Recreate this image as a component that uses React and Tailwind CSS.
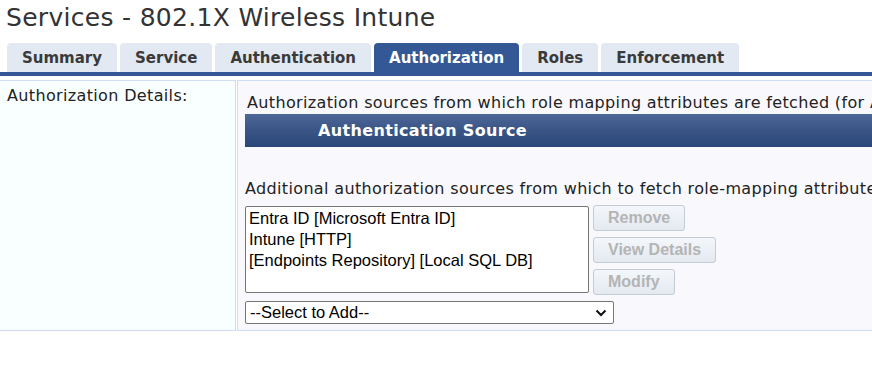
import React from "react";

const tabs = ["Summary", "Service", "Authentication", "Authorization", "Roles", "Enforcement"];

const sources = [
    "Entra ID [Microsoft Entra ID]",
    "Intune [HTTP]",
    "[Endpoints Repository] [Local SQL DB]",
];

function DisabledButton({ label }) {
    return (
        <button
            disabled
            className="h-[26px] px-[14px] rounded-[3px] border border-[#c3cbd6] bg-gradient-to-b from-[#f4f7fb] to-[#e4e9f1] text-[#b4b4b4] font-bold text-[16px] font-['Liberation_Sans',Arial,sans-serif] leading-none self-start"
        >
            {label}
        </button>
    );
}

export default function App() {
    return (
        <div className="w-[872px] h-[380px] overflow-hidden bg-white text-[#222] font-['DejaVu_Sans',Verdana,sans-serif]">
            {/* Page title */}
            <h1 className="pl-[6px] pt-[3px] h-[43px] text-[25px] tracking-[0.3px] leading-[30px] text-[#333]">
                Services - 802.1X Wireless Intune
            </h1>

            {/* Tabs */}
            <div className="flex gap-[3px] pl-[7px] h-[29px]">
                {tabs.map((t) => (
                    <div
                        key={t}
                        className={
                            t === "Authorization"
                                ? "px-[15px] pt-[1px] rounded-t-[4px] bg-[#335895] text-white font-bold text-[15px] flex items-center"
                                : "px-[15px] pt-[1px] rounded-t-[4px] bg-[#e2e9f3] text-[#3a3a3a] font-bold text-[15px] flex items-center"
                        }
                    >
                        {t}
                    </div>
                ))}
            </div>
            <div className="h-[4px] bg-[#335895]" />

            {/* Details table */}
            <div className="mt-[4px] flex text-[16px] tracking-[0.35px]">
                <div className="w-[236px] h-[251px] border-t border-b border-r border-[#cfdcf6] bg-[#f9fffe] pl-[7px] pt-[5px] leading-[19px]">
                    Authorization Details:
                </div>
                <div className="flex-1 ml-[1px] h-[251px] border-t border-b border-l border-[#cfdcf6] bg-[#f9f9fd] pl-[7px] pt-[12px] whitespace-nowrap overflow-hidden">
                    <div className="pl-[2px] leading-[19px]">
                        Authorization sources from which role mapping attributes are fetched (for Authentication Sources listed below)
                    </div>
                    <div className="mt-[2px] h-[33px] bg-gradient-to-b from-[#4d6898] via-[#3a5585] to-[#29467a] text-white font-bold pl-[73px] flex items-center">
                        Authentication Source
                    </div>
                    <div className="mt-[32px] leading-[19px]">
                        Additional authorization sources from which to fetch role-mapping attributes
                    </div>
                    <div className="mt-[8px] flex gap-[4px] tracking-normal">
                        <div className="w-[344px] h-[87px] border border-[#767676] rounded-[2px] bg-white pl-[3px] pt-[1px] font-['Liberation_Sans',Arial,sans-serif] text-[16.5px] leading-[21px] text-black">
                            {sources.map((s) => (
                                <div key={s}>{s}</div>
                            ))}
                        </div>
                        <div className="flex flex-col gap-[6px] -mt-[1px]">
                            <DisabledButton label="Remove" />
                            <DisabledButton label="View Details" />
                            <DisabledButton label="Modify" />
                        </div>
                    </div>
                    <div className="mt-[6px] w-[369px] h-[23px] border border-[#767676] rounded-[2px] bg-white flex items-center justify-between pl-[4px] pr-[6px] font-['Liberation_Sans',Arial,sans-serif] text-[16.5px] tracking-normal text-black">
                        <span>--Select to Add--</span>
                        <svg width="12" height="8" viewBox="0 0 12 8" fill="none">
                            <path d="M1.5 1.5 L6 6 L10.5 1.5" stroke="#111" strokeWidth="2" />
                        </svg>
                    </div>
                </div>
            </div>
        </div>
    );
}
